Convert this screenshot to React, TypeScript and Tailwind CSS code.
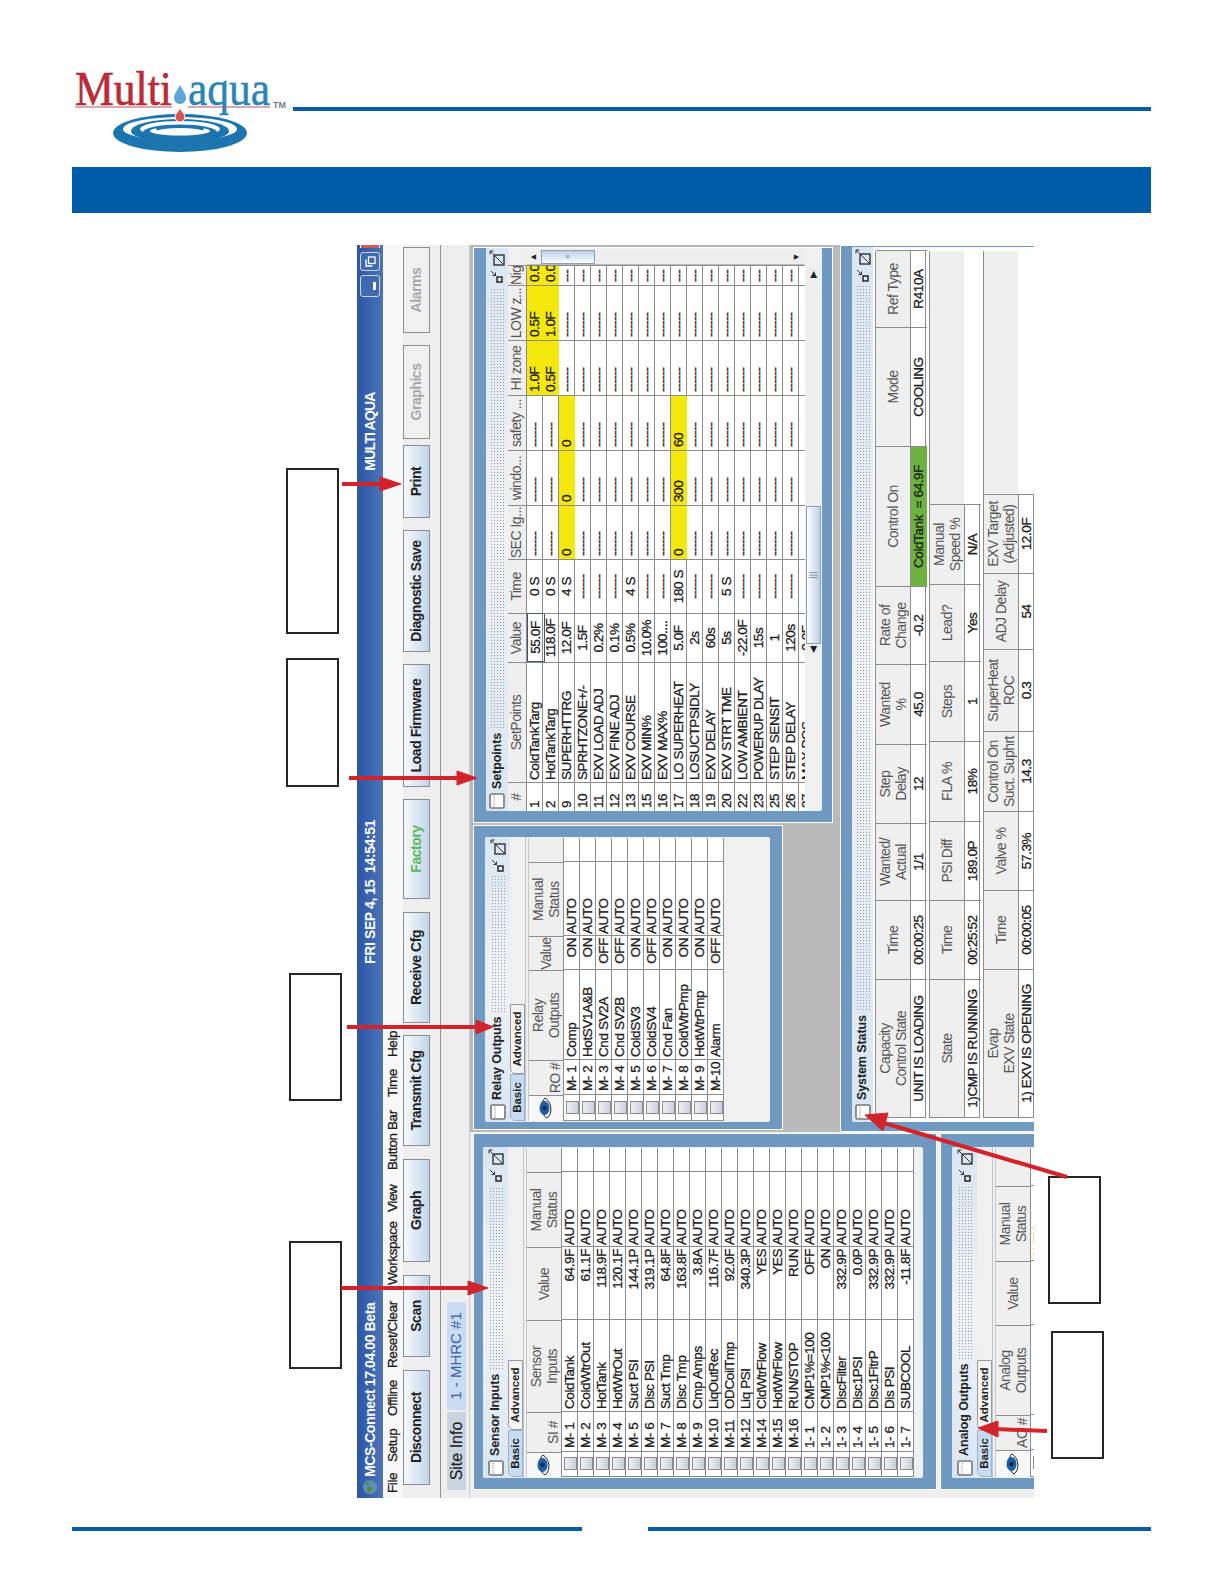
import React from "react";

const txt = "text-[13.5px] leading-[16px] tracking-[-0.4px] [-webkit-text-stroke:0.3px] text-[#1c1c1c] whitespace-pre";
const head = "text-[14px] leading-[16px] tracking-[-0.5px] text-[#555] text-center whitespace-pre";

const menus = [
  { label: "File", w: "w-[31px]" },
  { label: "Setup", w: "w-[46px]" },
  { label: "Offline", w: "w-[48px]" },
  { label: "Reset/Clear", w: "w-[83px]" },
  { label: "Workspace", w: "w-[73px]" },
  { label: "View", w: "w-[42px]" },
  { label: "Button Bar", w: "w-[73px]" },
  { label: "Time", w: "w-[40px]" },
  { label: "Help", w: "w-[40px]" },
];

const buttons = [
  { label: "Disconnect", w: "w-[115px] ml-[13px]" },
  { label: "Scan", w: "w-[82px] ml-[13px]" },
  { label: "Graph", w: "w-[103px] ml-[13px]" },
  { label: "Transmit Cfg", w: "w-[111px] ml-[13px]" },
  { label: "Receive Cfg", w: "w-[111px] ml-[12px]" },
  { label: "Factory", w: "w-[100px] ml-[13px]", tone: "green" },
  { label: "Load Firmware", w: "w-[123px] ml-[12px]" },
  { label: "Diagnostic Save", w: "w-[122px] ml-[12px]" },
  { label: "Print", w: "w-[73px] ml-[12px]" },
  { label: "Graphics", w: "w-[94px] ml-[6px]", tone: "off" },
  { label: "Alarms", w: "w-[86px] ml-[12px]", tone: "off" },
];

const sensors = [
  ["M- 1", "ColdTank", "64.9F"],
  ["M- 2", "ColdWtrOut", "61.1F"],
  ["M- 3", "HotTank", "118.9F"],
  ["M- 4", "HotWtrOut", "120.1F"],
  ["M- 5", "Suct PSI", "144.1P"],
  ["M- 6", "Disc PSI", "319.1P"],
  ["M- 7", "Suct Tmp", "64.8F"],
  ["M- 8", "Disc Tmp", "163.8F"],
  ["M- 9", "Cmp Amps", "3.8A"],
  ["M-10", "LiqOutRec", "116.7F"],
  ["M-11", "ODCoilTmp", "92.0F"],
  ["M-12", "Liq PSI", "340.3P"],
  ["M-14", "CldWtrFlow", "YES"],
  ["M-15", "HotWtrFlow", "YES"],
  ["M-16", "RUN/STOP", "RUN"],
  ["1- 1", "CMP1%=100", "OFF"],
  ["1- 2", "CMP1%<100", "ON"],
  ["1- 3", "DiscFilter", "332.9P"],
  ["1- 4", "Disc1PSI", "0.0P"],
  ["1- 5", "Disc1FltrP", "332.9P"],
  ["1- 6", "Dis PSI", "332.9P"],
  ["1- 7", "SUBCOOL", "-11.8F"],
];

const relays = [
  ["M- 1", "Comp", "ON"],
  ["M- 2", "HotSV1A&B", "ON"],
  ["M- 3", "Cnd SV2A", "OFF"],
  ["M- 4", "Cnd SV2B", "OFF"],
  ["M- 5", "ColdSV3", "ON"],
  ["M- 6", "ColdSV4", "OFF"],
  ["M- 7", "Cnd Fan", "ON"],
  ["M- 8", "ColdWtrPmp", "ON"],
  ["M- 9", "HotWtrPmp", "ON"],
  ["M-10", "Alarm", "OFF"],
];

const D = "------";
const setpoints: { n: string; name: string; value: string; time: string; cells: string[]; yellow: number[] }[] = [
  { n: "1", name: "ColdTankTarg", value: "55.0F", time: "0 S", cells: [D, D, D, "1.0F", "0.5F", "0.0"], yellow: [3, 4, 5] },
  { n: "2", name: "HotTankTarg", value: "118.0F", time: "0 S", cells: [D, D, D, "0.5F", "1.0F", "0.0"], yellow: [3, 4, 5] },
  { n: "9", name: "SUPERHTTRG", value: "12.0F", time: "4 S", cells: ["0", "0", "0", D, D, "---"], yellow: [0, 1, 2] },
  { n: "10", name: "SPRHTZONE+/-", value: "1.5F", time: D, cells: [D, D, D, D, D, "---"], yellow: [] },
  { n: "11", name: "EXV LOAD ADJ", value: "0.2%", time: D, cells: [D, D, D, D, D, "---"], yellow: [] },
  { n: "12", name: "EXV FINE ADJ", value: "0.1%", time: D, cells: [D, D, D, D, D, "---"], yellow: [] },
  { n: "13", name: "EXV COURSE", value: "0.5%", time: "4 S", cells: [D, D, D, D, D, "---"], yellow: [] },
  { n: "15", name: "EXV MIN%", value: "10.0%", time: D, cells: [D, D, D, D, D, "---"], yellow: [] },
  { n: "16", name: "EXV MAX%", value: "100....", time: D, cells: [D, D, D, D, D, "---"], yellow: [] },
  { n: "17", name: "LO SUPERHEAT", value: "5.0F", time: "180 S", cells: ["0", "300", "60", D, D, "---"], yellow: [0, 1, 2] },
  { n: "18", name: "LOSUCTPSIDLY", value: "2s", time: D, cells: [D, D, D, D, D, "---"], yellow: [] },
  { n: "19", name: "EXV DELAY", value: "60s", time: D, cells: [D, D, D, D, D, "---"], yellow: [] },
  { n: "20", name: "EXV STRT TME", value: "5s", time: "5 S", cells: [D, D, D, D, D, "---"], yellow: [] },
  { n: "22", name: "LOW AMBIENT", value: "-22.0F", time: D, cells: [D, D, D, D, D, "---"], yellow: [] },
  { n: "23", name: "POWERUP DLAY", value: "15s", time: D, cells: [D, D, D, D, D, "---"], yellow: [] },
  { n: "25", name: "STEP SENSIT", value: "1", time: D, cells: [D, D, D, D, D, "---"], yellow: [] },
  { n: "26", name: "STEP DELAY", value: "120s", time: D, cells: [D, D, D, D, D, "---"], yellow: [] },
  { n: "27", name: "MAX POS", value: "0.0F", time: D, cells: [D, D, D, D, D, "---"], yellow: [] },
];

const spCols = "grid grid-cols-[29px_120px_49px_54px_54px_55px_55px_55px_55px_20px]";

const status1 = [
  ["Capacity\nControl State", "UNIT IS LOADING"],
  ["Time", "00:00:25"],
  ["Wanted/\nActual", "1/1"],
  ["Step\nDelay", "12"],
  ["Wanted\n%", "45.0"],
  ["Rate of\nChange", "-0.2"],
  ["Control On", "ColdTank  = 64.9F"],
  ["Mode", "COOLING"],
  ["Ref Type", "R410A"],
];
const status2 = [
  ["State", "1)CMP IS RUNNING"],
  ["Time", "00:25:52"],
  ["PSI Diff", "189.0P"],
  ["FLA %", "18%"],
  ["Steps", "1"],
  ["Lead?", "Yes"],
  ["Manual\nSpeed %", "N/A"],
];
const status3 = [
  ["Evap\nEXV State", "1) EXV IS OPENING"],
  ["Time", "00:00:05"],
  ["Valve %", "57.3%"],
  ["Control On\nSuct. Suphrt", "14.3"],
  ["SuperHeat\nROC", "0.3"],
  ["ADJ Delay", "54"],
  ["EXV Target\n(Adjusted)", "12.0F"],
];

function WindowIcon() {
  return (
    <svg width="16" height="16" viewBox="0 0 16 16" className="shrink-0">
      <rect x="1" y="1" width="14" height="14" rx="1.5" fill="#fff" stroke="#777" strokeWidth="1.6" />
      <path d="M2 5h12" stroke="#999" strokeWidth="1" strokeDasharray="1.5 1" />
    </svg>
  );
}

function FrameControls() {
  return (
    <div className="flex items-center gap-[3px] pr-[2px] shrink-0">
      <svg width="14" height="14" viewBox="0 0 14 14">
        <rect x="1" y="7" width="5" height="5" fill="none" stroke="#333" strokeWidth="1.6" />
        <path d="M12 1 7.5 5.5M7.5 2.5v3h3" fill="none" stroke="#333" strokeWidth="1" />
      </svg>
      <svg width="16" height="16" viewBox="0 0 16 16">
        <rect x="1" y="5" width="10" height="10" fill="none" stroke="#333" strokeWidth="1.4" />
        <path d="M1 15 11 5" stroke="#333" strokeWidth="1" />
        <path d="M15 1 11.5 4.5M11.5 1h3.5v3.5" fill="none" stroke="#333" strokeWidth="1" />
      </svg>
    </div>
  );
}

function Eye() {
  return (
    <svg width="22" height="14" viewBox="0 0 22 14">
      <path d="M1 8C5 1 17 1 21 6 17 13 5 14 1 8Z" fill="#eef2f6" stroke="#2a2a2a" strokeWidth="1" />
      <ellipse cx="11" cy="5.5" rx="7" ry="5" fill="#1d5fa8" />
      <circle cx="11" cy="5.5" r="2.2" fill="#0b2346" />
    </svg>
  );
}

function Check() {
  return <div className="w-[13px] h-[13px] border border-[#8a8a8a] bg-linear-to-b from-[#eef1f5] to-[#c9d0da]" />;
}

function PanelHeader({ title, h }: { title: string; h: string }) {
  return (
    <div className={`flex items-center pl-[2px] bg-linear-to-r from-[#d9e6f3] via-[#f0f2f5] to-[#d9e6f3] shrink-0 ${h}`}>
      <WindowIcon />
      <span className="ml-[4px] text-[12.5px] font-bold tracking-[-0.1px] text-[#222] whitespace-pre">{title}</span>
      <div className="flex-1 mx-[4px] h-[14px] bg-[radial-gradient(#9a9a9a_0.7px,transparent_0.8px)] bg-size-[3px_3px]" />
      <FrameControls />
    </div>
  );
}

function Tabs() {
  return (
    <div className="flex h-[16px] pl-[1px] shrink-0 border-b border-[#b8c6d6]">
      <div className="w-[47px] h-[15px] rounded-tl-[5px] bg-[#c8dcf1] border border-[#9db2c8] flex items-center justify-center text-[11.5px] font-bold text-[#222]">
        Basic
      </div>
      <div className="w-[70px] h-[15px] rounded-tl-[5px] bg-[#f3f3f3] border border-[#9a9a9a] flex items-center justify-center text-[11.5px] font-bold text-[#222]">
        Advanced
      </div>
    </div>
  );
}

function IoHeader({ cols, labels }: { cols: string; labels: string[] }) {
  return (
    <div className="flex h-[35px] bg-[#efefef] border-b border-[#8c8c8c]">
      <div className={`grid ${cols}`}>
        <div className="flex items-center justify-center border-r border-[#8c8c8c] bg-[#f7f7f7]">
          <Eye />
        </div>
        {labels.map((l, i) => (
          <div key={i} className={`flex ${i === 0 ? "items-end" : "items-center"} justify-center border-r border-[#8c8c8c] ${head}`}>
            {l}
          </div>
        ))}
      </div>
    </div>
  );
}

function IoRows({ cols, rows }: { cols: string; rows: string[][] }) {
  return (
    <div className="bg-white border-l border-[#8c8c8c]">
      {rows.map((r) => (
        <div key={r[0] + r[1]} className={`grid ${cols} h-[16px] border-b border-[#8c8c8c]`}>
          <div className="flex items-center justify-center border-r border-[#8c8c8c]">
            <Check />
          </div>
          <div className={`border-r border-[#8c8c8c] pl-[3px] ${txt}`}>{r[0]}</div>
          <div className={`border-r border-[#8c8c8c] pl-[2px] overflow-hidden ${txt}`}>{r[1]}</div>
          <div className={`border-r border-[#8c8c8c] pr-[2px] text-right ${txt}`}>{r[2]}</div>
          <div className={`border-r border-[#8c8c8c] pl-[1px] ${txt}`}>AUTO</div>
        </div>
      ))}
    </div>
  );
}

function Frame({ className, panel, children }: { className: string; panel: string; children: React.ReactNode }) {
  return (
    <div className={`bg-[#7099c2] border border-white overflow-hidden shrink-0 ${className}`}>
      <div className={`bg-[#f0f0f0] rounded-[2px] flex flex-col overflow-hidden ${panel}`}>{children}</div>
    </div>
  );
}

function IoPanel({ title, cols, labels, rows, tableW }: { title: string; cols: string; labels: string[]; rows: string[][]; tableW: string }) {
  return (
    <>
      <PanelHeader title={title} h="h-[25px]" />
      <Tabs />
      <div className={`mt-[2px] mx-[1px] border-t border-[#c8c8c8] ${tableW}`}>
        <IoHeader cols={cols} labels={labels} />
        <IoRows cols={cols} rows={rows} />
      </div>
    </>
  );
}

function SetpointsTable() {
  return (
    <div className="flex-1 flex flex-col overflow-hidden">
      <div className="flex flex-1 min-h-0">
        <div className="w-[546px] shrink-0 flex flex-col overflow-hidden">
          <div className={`${spCols} h-[19px] bg-[#efefef] border-b border-[#8c8c8c]`}>
            {["#", "SetPoints", "Value", "Time", "SEC Ig...", "windo...", "safety ...", "HI zone", "LOW z...", "Nig"].map((h) => (
              <div key={h} className={`border-r border-[#8c8c8c] overflow-hidden ${head}`}>
                {h}
              </div>
            ))}
          </div>
          <div className="h-[278px] overflow-hidden bg-white">
            {setpoints.map((r, i) => (
              <div key={r.n} className={`${spCols} h-[16px] border-b border-[#8c8c8c]`}>
                <div className={`border-r border-[#8c8c8c] pl-[3px] ${txt}`}>{r.n}</div>
                <div className={`border-r border-[#8c8c8c] pl-[2px] ${txt}`}>{r.name}</div>
                <div className={`border-r text-center ${i === 0 ? "border border-[#44566e]" : "border-[#8c8c8c]"} ${txt}`}>{r.value}</div>
                <div className={`border-r border-[#8c8c8c] text-center ${txt}`}>{r.time}</div>
                {r.cells.map((c, j) => (
                  <div key={j} className={`border-r border-[#8c8c8c] pl-[3px] overflow-hidden ${r.yellow.includes(j) ? "bg-[#f5e80c]" : ""} ${txt}`}>
                    {c}
                  </div>
                ))}
              </div>
            ))}
          </div>
        </div>
        <div className="w-[15px] h-[277px] mt-[19px] flex flex-col bg-[#eee] border-l border-[#bbb]">
          <div className="h-[14px] flex items-center justify-center text-[9px] text-[#222]">▲</div>
          <div className="h-[54px] bg-linear-to-r from-[#fdfeff] to-[#bcd0e6] border border-[#8aa0b8] flex items-center justify-center text-[7px] text-[#789]">≡</div>
          <div className="flex-1" />
          <div className="h-[14px] flex items-center justify-center text-[9px] text-[#222]">▼</div>
        </div>
      </div>
      <div className="h-[15px] flex shrink-0 mb-[1px]">
        <div className="w-[156px] shrink-0" />
        <div className="w-[388px] flex bg-[#eee]">
          <div className="w-[11px] flex items-center justify-center text-[9px] text-[#222]">◀</div>
          <div className="w-[138px] bg-linear-to-b from-[#fdfeff] to-[#bcd0e6] border border-[#8aa0b8] flex items-center justify-center text-[9px] text-[#789]">|||</div>
          <div className="flex-1" />
          <div className="w-[14px] flex items-center justify-center text-[9px] text-[#222]">▶</div>
        </div>
      </div>
    </div>
  );
}

function StatusTable({ cols, rows, fill, green }: { cols: string; rows: string[][]; fill?: boolean; green?: number }) {
  return (
    <div className="w-[867px]">
      <div className="flex h-[35px] bg-[#efefef] border-t border-[#8c8c8c]">
        <div className={`grid ${cols} border-l border-[#8c8c8c]`}>
          {rows.map((r, i) => (
            <div key={i} className={`flex items-center justify-center border-r border-[#8c8c8c] ${head}`}>
              {r[0]}
            </div>
          ))}
        </div>
        {fill && <div className="flex-1" />}
      </div>
      <div className={`grid ${cols} h-[16px] border-y border-l border-[#8c8c8c] w-fit bg-white`}>
        {rows.map((r, i) => (
          <div key={i} className={`text-center border-r border-[#8c8c8c] ${txt} ${i === green ? "bg-[#6cb33f]" : ""}`}>
            {r[1]}
          </div>
        ))}
      </div>
    </div>
  );
}

function McsWindow() {
  return (
    <div className="w-[1253px] h-[677px] overflow-hidden flex flex-col bg-[#eee] [font-family:'Liberation_Sans',Arial,sans-serif]">
      <div className="h-[26px] shrink-0 flex items-center bg-linear-to-b from-[#2c56a6] to-[#4a73b8] text-white font-bold text-[14px] tracking-[-0.4px] whitespace-pre">
        <svg width="16" height="16" viewBox="0 0 16 16" className="ml-[3px]">
          <circle cx="8" cy="8" r="7" fill="#5d8fb0" />
          <path d="M3 6c2-2 4-1 5 1s-2 4-3 3-3-2-2-4Zm7-3c2 0 3 2 3 4l-3-1Z" fill="#4f8a3c" />
        </svg>
        <span className="ml-[2px] w-[514px]">MCS-Connect 17.04.00 Beta</span>
        <span className="w-[494px]">FRI SEP 4, 15  14:54:51</span>
        <span className="w-[174px] tracking-[-0.8px]">MULTI AQUA</span>
        <div className="flex gap-[4px] items-center">
          <div className="w-[22px] h-[20px] rounded-[3px] bg-[#3f6ab0] border border-[#cdd9ea] flex items-end justify-center pb-[3px]">
            <div className="w-[8px] h-[3px] bg-white" />
          </div>
          <div className="w-[19px] h-[20px] rounded-[3px] bg-[#3f6ab0] border border-[#cdd9ea] flex items-center justify-center">
            <svg width="11" height="11" viewBox="0 0 11 11" fill="none" stroke="#fff" strokeWidth="1.3">
              <path d="M1 7.5V1h6.500" />
              <rect x="3.500" y="3.500" width="6.500" height="6.500" />
            </svg>
          </div>
          <div className="w-[3px] h-[20px] bg-[#cf5a5a] border-y border-white" />
        </div>
      </div>
      <div className="h-[20px] shrink-0 flex items-center pl-[5px] bg-[#f8f8f8]">
        {menus.map((m) => (
          <span key={m.label} className={`${m.w} ${txt}`}>
            {m.label}
          </span>
        ))}
      </div>
      <div className="h-[38px] shrink-0 flex items-start border-b border-[#8f8f8f] bg-[#eeeeee]">
        {buttons.map((b) => (
          <div
            key={b.label}
            className={`h-[27px] shrink-0 flex items-center justify-center font-bold text-[14px] tracking-[-0.45px] border border-[#8a8f96] ${b.w} ${
              b.tone === "off" ? "bg-[#f0f0f0] text-[#a8a8a8]" : "bg-linear-to-b from-[#f7fafd] to-[#c3d5e9]"
            } ${b.tone === "green" ? "text-[#5cb85c]" : ""} ${b.tone ? "" : "text-[#222]"}`}
          >
            {b.label}
          </div>
        ))}
      </div>
      <div className="h-[29px] shrink-0 flex pl-[8px] pt-[6px] border-b border-[#c5ced8]">
        <div className="w-[78px] h-[19px] bg-[#c9d4e0] rounded-t-[2px] flex items-center justify-center text-[16px] text-[#222] [-webkit-text-stroke:0.2px]">Site Info</div>
        <div className="w-[108px] ml-[2px] h-[19px] bg-[#c9dcf2] rounded-t-[2px] flex items-center justify-center text-[15px] text-[#3a63a8] whitespace-pre">1 - MHRC #1</div>
      </div>
      <div className="flex-1 min-h-0 flex pl-[8px] overflow-hidden">
        <div className="w-[357px] shrink-0 flex flex-col gap-[3px] pt-[3px]">
          <Frame className="h-[464px] pl-[11px] pr-[13px] pt-[9px] pb-[13px]" panel="h-full">
            <IoPanel
              title="Sensor Inputs"
              cols="grid-cols-[25px_40px_92px_73px_75px]"
              labels={["SI #", "Sensor\nInputs", "Value", "Manual\nStatus"]}
              rows={sensors}
              tableW="w-[329px]"
            />
          </Frame>
          <Frame className="h-[120px] pl-[11px] pr-[13px] pt-[11px]" panel="h-[120px]">
            <IoPanel
              title="Analog Outputs"
              cols="grid-cols-[27px_35px_90px_64px_75px]"
              labels={["AO #", "Analog\nOutputs", "Value", "Manual\nStatus"]}
              rows={[["", "", ""]]}
              tableW="w-[329px]"
            />
          </Frame>
        </div>
        <div className="w-[888px] shrink-0 ml-[1px] flex flex-col bg-[#b9b9b9] pt-[3px]">
          <div className="h-[367px] shrink-0 flex gap-[2px] pl-[2px]">
            <Frame className="w-[305px] h-[310px] pl-[7px] pr-[11px] pt-[11px] pb-[12px]" panel="h-full">
              <IoPanel
                title="Relay Outputs"
                cols="grid-cols-[26px_35px_90px_34px_74px]"
                labels={["RO #", "Relay\nOutputs", "Value", "Manual\nStatus"]}
                rows={relays}
                tableW="w-[283px]"
              />
            </Frame>
            <Frame className="w-[576px] h-[360px] pl-[11px] pr-[0px] pt-[12px] pb-[10px]" panel="h-full">
              <PanelHeader title="Setpoints" h="h-[22px]" />
              <SetpointsTable />
            </Frame>
          </div>
          <Frame className="h-[200px] w-[887px] pl-[9px] pr-[1px] pt-[11px]" panel="h-[200px] bg-white">
            <PanelHeader title="System Status" h="h-[21px]" />
            <div className="pl-[4px] pt-[2px] flex flex-col gap-[3px] bg-white flex-1">
              <StatusTable cols="grid-cols-[138px_79px_77px_79px_80px_78px_140px_119px_77px]" rows={status1} green={6} />
              <StatusTable cols="grid-cols-[138px_79px_79px_80px_80px_77px_80px]" rows={status2} fill />
              <StatusTable cols="grid-cols-[148px_79px_79px_80px_82px_76px_79px]" rows={status3} fill />
            </div>
          </Frame>
        </div>
      </div>
    </div>
  );
}

function Logo() {
  return (
    <svg width="221" height="92" viewBox="72 65 221 92" className="shrink-0">
      <text x="75" y="105" fontFamily="'Liberation Serif', serif" fontSize="49" fill="#c22a38" stroke="#a8232f" strokeWidth="0.6" textLength="97" lengthAdjust="spacingAndGlyphs">
        Multi
      </text>
      <text x="188" y="105" fontFamily="'Liberation Serif', serif" fontSize="49" fill="#2a84b8" stroke="#2a84b8" strokeWidth="0.5" textLength="82" lengthAdjust="spacingAndGlyphs">
        aqua
      </text>
      <text x="273" y="108" fontFamily="'Liberation Sans', sans-serif" fontSize="9" fontWeight="700" fill="#6f7f8a">
        TM
      </text>
      <path d="M75 107h97M188 107h82" stroke="#b9535c" strokeWidth="1" />
      <path d="M180 85c3 6 6 9 6 13a6 6 0 0 1-12 0c0-4 3-7 6-13Z" fill="#5aa6d6" />
      <ellipse cx="180" cy="133" rx="67" ry="19" fill="#1b75ae" />
      <ellipse cx="180" cy="129" rx="57" ry="12" fill="#fff" />
      <ellipse cx="180" cy="131" rx="49" ry="12" fill="#1b75ae" />
      <ellipse cx="180" cy="129" rx="40" ry="8" fill="#fff" />
      <ellipse cx="180" cy="132" rx="37" ry="7.5" fill="#1b75ae" />
      <ellipse cx="180" cy="131" rx="30" ry="4.5" fill="#fff" />
      <ellipse cx="180" cy="129" rx="24" ry="4" fill="#1b75ae" />
      <ellipse cx="180" cy="131" rx="23" ry="3" fill="#fff" />
      <path d="M180 108c2 4 5 6 5 9a5 5 0 0 1-10 0c0-3 3-5 5-9Z" fill="#d9534f" stroke="#fff" strokeWidth="1" />
    </svg>
  );
}

function NoteBox({ className }: { className: string }) {
  return <div className={`absolute border-[2px] border-[#262626] bg-white ${className}`} />;
}

export default function App() {
  return (
    <div className="relative w-[1224px] h-[1584px] bg-white overflow-hidden pt-[65px] px-[72px]">
      <div className="flex h-[102px] items-start">
        <Logo />
        <div className="mt-[42px] w-[858px] h-[4px] bg-[#0a5ca8]" />
      </div>
      <div className="w-[1079px] h-[46px] bg-[#005ca9]" />

      <div className="ml-[285px] mt-[32px] w-[677px] h-[1253px] overflow-hidden">
        <div className="[transform:translateY(1253px)_rotate(-90deg)] origin-top-left w-[1253px] h-[677px]">
          <McsWindow />
        </div>
      </div>

      <div className="mt-[29px] flex justify-between w-[1079px]">
        <div className="w-[510px] h-[4px] bg-[#0a5ca8]" />
        <div className="w-[503px] h-[4px] bg-[#0a5ca8]" />
      </div>

      <NoteBox className="left-[286px] top-[468px] w-[53px] h-[166px]" />
      <NoteBox className="left-[286px] top-[658px] w-[53px] h-[129px]" />
      <NoteBox className="left-[289px] top-[973px] w-[53px] h-[128px]" />
      <NoteBox className="left-[289px] top-[1241px] w-[53px] h-[128px]" />
      <NoteBox className="left-[1048px] top-[1176px] w-[53px] h-[128px]" />
      <NoteBox className="left-[1051px] top-[1331px] w-[53px] h-[128px]" />

      <svg className="absolute left-0 top-0 pointer-events-none" width="1224" height="1584" viewBox="0 0 1224 1584">
        <g fill="#d2232a" stroke="#d2232a">
          <path d="M342 484H385" strokeWidth="4" />
          <path d="M380 477 401 484 380 491Z" strokeWidth="1" />
          <path d="M349 778H460" strokeWidth="4" />
          <path d="M457 771 477 778 457 785Z" strokeWidth="1" />
          <path d="M347 1027H480" strokeWidth="4" />
          <path d="M476 1020 493 1027 476 1034Z" strokeWidth="1" />
          <path d="M341 1288H472" strokeWidth="4" />
          <path d="M468 1281 488 1288 468 1295Z" strokeWidth="1" />
          <path d="M1067 1177 884 1123" strokeWidth="4" />
          <path d="M865 1115 888 1113 883 1131Z" strokeWidth="1" />
          <path d="M1047 1431 995 1429" strokeWidth="4" />
          <path d="M978 1428 998 1421 998 1437Z" strokeWidth="1" />
        </g>
      </svg>
    </div>
  );
}
